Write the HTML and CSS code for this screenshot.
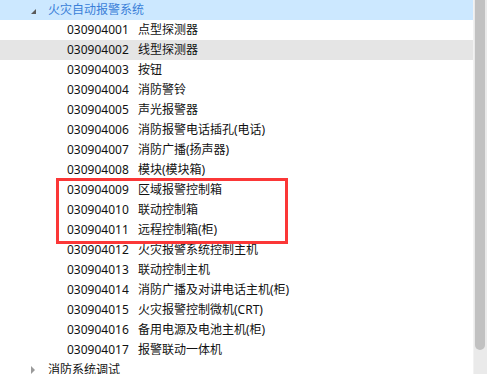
FILE: index.html
```html
<!DOCTYPE html>
<html lang="zh-CN">
<head>
    <meta charset="UTF-8">
    <title>火灾自动报警系统</title>
    <link rel="stylesheet" href="styles.css">
</head>
<body>
<div class="panel">
    <div class="tree">
        <div class="row group open">
            <span class="arrow down"></span>
            <span class="group-name">火灾自动报警系统</span>
        </div>
        <div class="row item"><span class="code">030904001</span><span>点型探测器</span></div>
        <div class="row item hover"><span class="code">030904002</span><span>线型探测器</span></div>
        <div class="row item"><span class="code">030904003</span><span>按钮</span></div>
        <div class="row item"><span class="code">030904004</span><span>消防警铃</span></div>
        <div class="row item"><span class="code">030904005</span><span>声光报警器</span></div>
        <div class="row item"><span class="code">030904006</span><span>消防报警电话插孔(电话)</span></div>
        <div class="row item"><span class="code">030904007</span><span>消防广播(扬声器)</span></div>
        <div class="row item"><span class="code">030904008</span><span>模块(模块箱)</span></div>
        <div class="row item"><span class="code">030904009</span><span>区域报警控制箱</span></div>
        <div class="row item"><span class="code">030904010</span><span>联动控制箱</span></div>
        <div class="row item"><span class="code">030904011</span><span>远程控制箱(柜)</span></div>
        <div class="row item"><span class="code">030904012</span><span>火灾报警系统控制主机</span></div>
        <div class="row item"><span class="code">030904013</span><span>联动控制主机</span></div>
        <div class="row item"><span class="code">030904014</span><span>消防广播及对讲电话主机(柜)</span></div>
        <div class="row item"><span class="code">030904015</span><span>火灾报警控制微机(CRT)</span></div>
        <div class="row item"><span class="code">030904016</span><span>备用电源及电池主机(柜)</span></div>
        <div class="row item"><span class="code">030904017</span><span>报警联动一体机</span></div>
        <div class="row group">
            <span class="arrow right"></span>
            <span>消防系统调试</span>
        </div>
        <div class="mark"></div>
    </div>
    <div class="scrollbar">
        <div class="thumb"></div>
    </div>
</div>
</body>
</html>
```

FILE: styles.css
```css
html, body{
    margin: 0;
    padding: 0;
    height: 100%;
    overflow: hidden;
    background: #ffffff;
    font-family: "Noto Sans", "Noto Sans CJK SC", sans-serif;
    font-size: 12px;
    color: #111111;
}

.panel{
    display: flex;
    height: 374px;
}

.tree{
    flex: 1;
    position: relative;
}

.row{
    height: 20px;
    line-height: 20px;
    display: flex;
    align-items: center;
    white-space: nowrap;
}

.item{
    padding-left: 67px;
}

.item.hover{
    background: #e5e5e5;
}

.code{
    display: inline-block;
    width: 71px;
}

.group{
    padding-left: 31px;
}

.group.open{
    background: #cce8ff;
}

.group-name{
    color: #3a7fd8;
}

.arrow{
    display: inline-block;
    width: 0;
    height: 0;
    margin-right: 12px;
}

.arrow.down{
    border-style: solid;
    border-width: 0 0 5px 5px;
    border-color: transparent transparent #5a5a5a transparent;
    margin-top: 2px;
}

.arrow.right{
    border-style: solid;
    border-width: 4px 0 4px 4px;
    border-color: transparent transparent transparent #9a9a9a;
    margin-right: 13px;
}

/* red highlight drawn over rows 9-11 */
.mark{
    position: absolute;
    left: 56px;
    top: 178px;
    width: 226px;
    height: 60px;
    border: 3px solid #fb3737;
}

.scrollbar{
    width: 14px;
    background: #eaeaea;
    border-left: 1px solid #f2f2f2;
    box-sizing: border-box;
}

.thumb{
    margin: 0 2px 0 1px;
    height: 350px;
    background: #c1c1c1;
    border-radius: 0 0 5px 5px;
}
```
